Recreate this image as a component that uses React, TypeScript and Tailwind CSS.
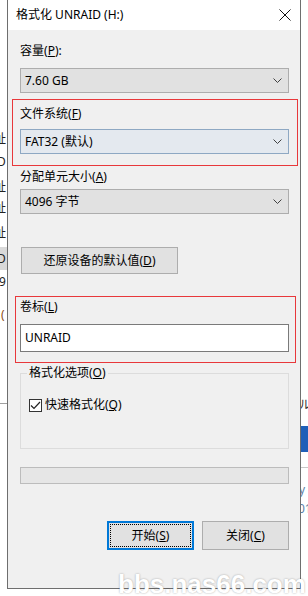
import React from "react";

const font = "font-['Noto_Sans','Noto_Sans_CJK_SC',sans-serif]";

function Chevron() {
  return (
    <svg width="9" height="5" viewBox="0 0 9 5" className="shrink-0">
      <path d="M0.5 0.5 L4.5 4.5 L8.5 0.5" fill="none" stroke="#404040" strokeWidth="1" />
    </svg>
  );
}

function Combo({ text, focused }: { text: string; focused?: boolean }) {
  return (
    <div
      className={
        focused
          ? "h-[25px] flex items-center justify-between pl-[4px] pr-[6px] border border-[#8ea8c3] bg-[#e4e9ef]"
          : "h-[25px] flex items-center justify-between pl-[4px] pr-[6px] border border-[#adadad] bg-[#e1e1e1]"
      }
    >
      <span className="text-[12px] leading-[16px] text-black">{text}</span>
      <Chevron />
    </div>
  );
}

function Label({ name, k, tail }: { name: string; k: string; tail?: string }) {
  return (
    <div className="h-[16px] leading-[16px] text-[12px] text-black whitespace-nowrap">
      {name}(<span className="underline">{k}</span>){tail}
    </div>
  );
}

export default function App() {
  return (
    <div className={`relative w-[308px] h-[596px] bg-white overflow-hidden flex ${font}`}>
      {/* window behind, left edge */}
      <div className="w-[7px] shrink-0 overflow-hidden flex flex-col pt-[131px] text-[12px] text-[#222]">
        <div className="h-[16px] leading-[16px] -ml-[6px] whitespace-nowrap">址</div>
        <div className="h-[16px] leading-[16px] mt-[7px] -ml-[3px] whitespace-nowrap">D</div>
        <div className="h-[16px] leading-[16px] mt-[9px] -ml-[6px] whitespace-nowrap">址</div>
        <div className="h-[16px] leading-[16px] mt-[5px] -ml-[6px] whitespace-nowrap">址</div>
        <div className="h-[16px] leading-[16px] mt-[9px] -ml-[6px] whitespace-nowrap">址</div>
        <div className="h-[23px] mt-[6px] bg-[#d9d9d9] flex items-center">
          <span className="leading-[16px] -ml-[3px]">D</span>
        </div>
        <div className="h-[16px] leading-[16px] mt-[4px] -ml-[1px] whitespace-nowrap">9</div>
        <div className="h-[16px] leading-[16px] mt-[17px] ml-[1px] text-[#8a4b14] whitespace-nowrap">(</div>
        <div className="h-[1px] mt-[80px] bg-[#a0a0a0]" />
      </div>

      {/* dialog */}
      <div className="w-[294px] h-[589px] shrink-0 flex flex-col border-x border-b border-[#6e6e6e]">
        <div className="h-[30px] bg-white flex items-center justify-between pl-[8px] pr-[8px]">
          <span className="text-[12px] leading-[16px] text-black">格式化 UNRAID (H:)</span>
          <svg width="12" height="12" viewBox="0 0 12 12" className="mr-[1px]">
            <path d="M0.5 0.5 L11.5 11.5 M11.5 0.5 L0.5 11.5" stroke="#111" strokeWidth="1" />
          </svg>
        </div>

        <div className="flex-1 bg-[#f0f0f0] pl-[12px] pr-[11px] flex flex-col">
          <div className="mt-[13px]">
            <Label name="容量" k="P" tail=":" />
          </div>
          <div className="mt-[9px]">
            <Combo text="7.60 GB" />
          </div>

          <div className="mt-[6px] -ml-[8px] -mr-[9px] border border-[#e8383b] pt-[6px] pb-[11px] pl-[7px] pr-[8px]">
            <Label name="文件系统" k="F" />
            <div className="mt-[7px]">
              <Combo text="FAT32 (默认)" focused />
            </div>
          </div>

          <div className="mt-[3px]">
            <Label name="分配单元大小" k="A" />
          </div>
          <div className="mt-[4px]">
            <Combo text="4096 字节" />
          </div>

          <div className="mt-[33px] ml-[1px] w-[157px] h-[27px] border border-[#adadad] bg-[#e1e1e1] flex items-center justify-center text-[12px] leading-[16px] text-black">
            还原设备的默认值(<span className="underline">D</span>)
          </div>

          <div className="mt-[22px] -ml-[5px] -mr-[7px] border border-[#e8383b] pt-[2px] pb-[10px] pl-[4px] pr-[6px]">
            <Label name="卷标" k="L" />
            <div className="mt-[9px] h-[28px] bg-white border border-[#7a7a7a] flex items-center pl-[4px] text-[12px] leading-[16px] text-black">
              UNRAID
            </div>
          </div>

          <div className="relative mt-[10px] h-[76px] border border-[#dcdcdc] pt-[23px] pl-[8px]">
            <span className="absolute left-[6px] -top-[9px] px-[2px] bg-[#f0f0f0] text-[12px] leading-[16px] text-black whitespace-nowrap">
              格式化选项(<span className="underline">O</span>)
            </span>
            <div className="flex items-center gap-[3px]">
              <div className="w-[13px] h-[13px] border border-[#333] bg-white flex items-center justify-center">
                <svg width="11" height="9" viewBox="0 0 11 9">
                  <path d="M1 4.5 L4 7.5 L10 1" fill="none" stroke="#222" strokeWidth="1.2" />
                </svg>
              </div>
              <span className="text-[12px] leading-[16px] text-black">
                快速格式化(<span className="underline">Q</span>)
              </span>
            </div>
          </div>

          <div className="mt-[18px] h-[17px] border border-[#bcbcbc] bg-[#e6e6e6]" />

          <div className="mt-[37px] flex justify-end gap-[8px]">
            <div className="w-[87px] h-[29px] border-2 border-[#0078d7] bg-[#e1e1e1] p-[1px]">
              <div className="w-full h-full border border-dotted border-black flex items-center justify-center text-[12px] leading-[16px] text-black">
                开始(<span className="underline">S</span>)
              </div>
            </div>
            <div className="w-[87px] h-[29px] border border-[#adadad] bg-[#e1e1e1] flex items-center justify-center text-[12px] leading-[16px] text-black">
              关闭(<span className="underline">C</span>)
            </div>
          </div>
        </div>
      </div>

      {/* window behind, right edge */}
      <div className="w-[7px] shrink-0 overflow-hidden flex flex-col pt-[397px] text-[12px] text-[#333]">
        <div className="h-[16px] leading-[16px] -ml-[2px] whitespace-nowrap">ル</div>
        <div className="h-[26px] mt-[13px] bg-[#1f5fb8]" />
        <div className="h-[1px] mt-[15px] bg-[#c8c8c8]" />
        <div className="h-[16px] leading-[16px] mt-[14px] -ml-[2px] text-[#5c7fa8] whitespace-nowrap">y</div>
        <div className="h-[16px] leading-[16px] mt-[3px] -ml-[3px] text-[#5c7fa8] whitespace-nowrap">01</div>
      </div>

      {/* watermark */}
      <div className="absolute left-[118px] top-[571px] text-[26px] leading-none font-bold text-white font-['Liberation_Sans',sans-serif] whitespace-nowrap [text-shadow:0_0_2px_rgba(0,0,0,0.35)]">
        bbs.nas66.com
      </div>
    </div>
  );
}
